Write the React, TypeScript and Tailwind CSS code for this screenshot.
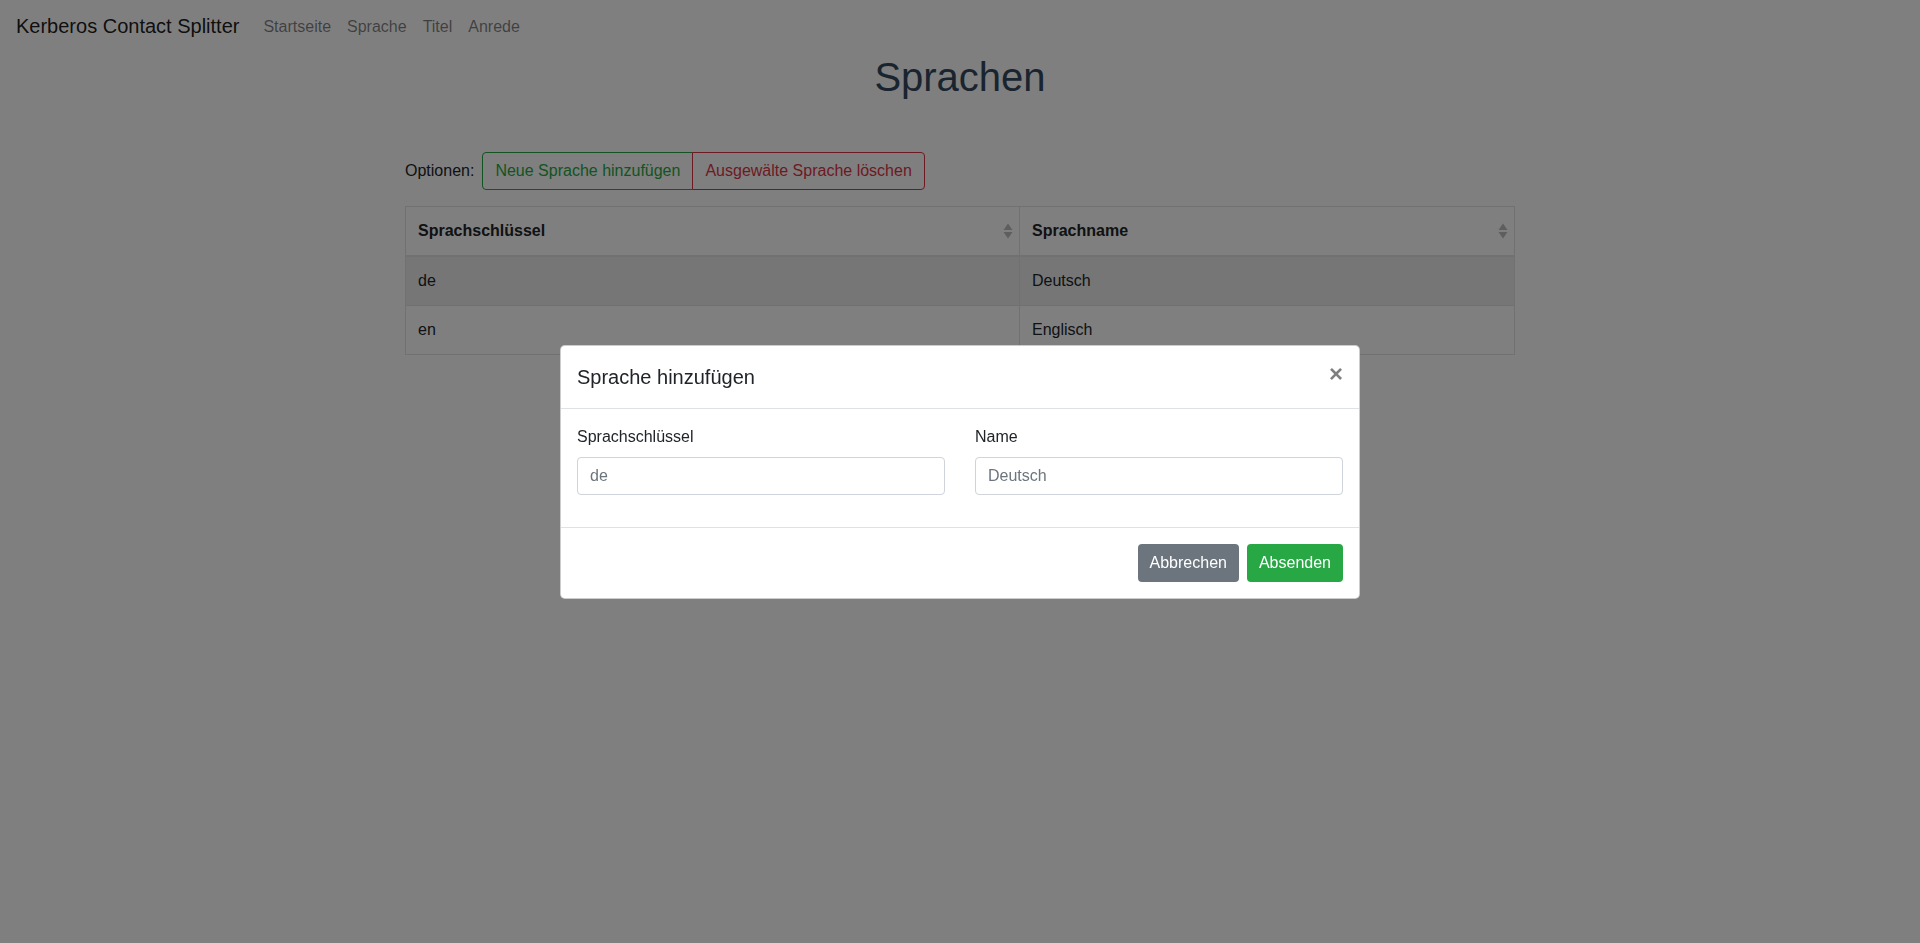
import { type ReactNode } from "react";

const navLinks = ["Startseite", "Sprache", "Titel", "Anrede"];

const rows = [
  { key: "de", name: "Deutsch", active: true },
  { key: "en", name: "Englisch", active: false },
];

function SortIcon() {
  return (
    <svg width="10" height="16" viewBox="0 0 10 16" className="shrink-0">
      <path d="M5 0.5 L9.5 7 L0.5 7 Z" fill="#bdbdbd" />
      <path d="M5 15.5 L9.5 9 L0.5 9 Z" fill="#bdbdbd" />
    </svg>
  );
}

function HeadCell({ children, className }: { children: ReactNode; className?: string }) {
  return (
    <th className={"border border-[#dee2e6] border-b-2 p-0 text-left font-bold " + (className ?? "")}>
      <div className="flex items-center justify-between py-3 pl-3 pr-[6px] leading-6">
        <span>{children}</span>
        <SortIcon />
      </div>
    </th>
  );
}

function Field({ label, placeholder }: { label: string; placeholder: string }) {
  return (
    <div className="flex flex-col">
      <label className="mb-2 leading-6">{label}</label>
      <input
        placeholder={placeholder}
        className="h-[38px] rounded-[4px] border border-[#ced4da] bg-white px-3 text-base text-[#495057] outline-none placeholder:text-[#6c757d]"
      />
    </div>
  );
}

export default function App() {
  return (
    <div className="relative min-h-[943px] bg-white font-['Liberation_Sans',Arial,sans-serif] text-base text-[#212529]">
      {/* Navbar */}
      <nav className="flex h-[49px] items-start px-4 pt-[11px]">
        <span className="mr-4 text-[20px] leading-[30px] text-black/90">Kerberos Contact Splitter</span>
        <ul className="flex pt-[4px]">
          {navLinks.map((l) => (
            <li key={l} className="px-2 leading-6 text-black/50">
              {l}
            </li>
          ))}
        </ul>
      </nav>

      <main className="mx-auto w-[1110px]">
        <h1 className="mt-[4px] text-center text-[40px] font-medium leading-[48px] text-[#34495e]">Sprachen</h1>

        {/* Options */}
        <div className="mt-[51px] flex items-center">
          <span className="mr-2 leading-6">Optionen:</span>
          <div className="flex">
            <button className="h-[38px] rounded-l-[4px] border border-[#28a745] px-3 leading-6 text-[#28a745]">
              Neue Sprache hinzufügen
            </button>
            <button className="-ml-px h-[38px] rounded-r-[4px] border border-[#dc3545] px-3 leading-6 text-[#dc3545]">
              Ausgewälte Sprache löschen
            </button>
          </div>
        </div>

        {/* Table */}
        <table className="mt-4 w-full border-collapse border border-[#dee2e6]">
          <thead>
            <tr>
              <HeadCell className="w-[614px]">Sprachschlüssel</HeadCell>
              <HeadCell>Sprachname</HeadCell>
            </tr>
          </thead>
          <tbody>
            {rows.map((r) => (
              <tr key={r.key} className={r.active ? "bg-[#ececec]" : ""}>
                <td className="border border-[#dee2e6] px-3 py-3 leading-6">{r.key}</td>
                <td className="border border-[#dee2e6] px-3 py-3 leading-6">{r.name}</td>
              </tr>
            ))}
          </tbody>
        </table>
      </main>

      {/* Modal backdrop */}
      <div className="fixed inset-0 bg-black/50" />

      {/* Modal */}
      <div className="fixed inset-0 flex items-center justify-center">
        <div className="w-[800px] rounded-[5px] border border-black/20 bg-white">
          <div className="flex items-start justify-between border-b border-[#dee2e6] p-4">
            <h5 className="text-[20px] font-medium leading-[30px]">Sprache hinzufügen</h5>
            <button className="-m-4 p-4 text-[24px] font-bold leading-none text-black opacity-50">×</button>
          </div>
          <div className="p-4">
            <div className="mb-4 grid grid-cols-2 gap-[30px]">
              <Field label="Sprachschlüssel" placeholder="de" />
              <Field label="Name" placeholder="Deutsch" />
            </div>
          </div>
          <div className="flex justify-end gap-2 border-t border-[#dee2e6] p-4">
            <button className="h-[38px] rounded-[4px] bg-[#6c757d] px-3 leading-6 text-white">Abbrechen</button>
            <button className="h-[38px] rounded-[4px] bg-[#28a745] px-3 leading-6 text-white">Absenden</button>
          </div>
        </div>
      </div>
    </div>
  );
}
